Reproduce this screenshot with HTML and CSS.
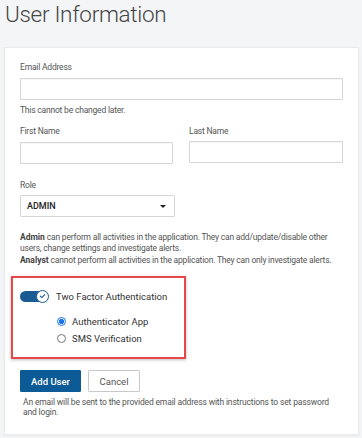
FILE: index.html
```html
<!DOCTYPE html>
<html lang="en">
<head>
<meta charset="utf-8">
<title>User Information</title>
<link rel="stylesheet" href="styles.css">
</head>
<body>
<h1 class="title">User Information</h1>
<div class="card">
  <div class="field">
    <label class="label" for="email">Email Address</label>
    <input class="input" id="email" type="text">
    <div class="hint">This cannot be changed later.</div>
  </div>
  <div class="row">
    <div class="field">
      <label class="label" for="first">First Name</label>
      <input class="input" id="first" type="text">
    </div>
    <div class="field">
      <label class="label" for="last">Last Name</label>
      <input class="input" id="last" type="text">
    </div>
  </div>
  <div class="field role">
    <label class="label">Role</label>
    <div class="select">
      <span class="select-value">ADMIN</span>
      <span class="caret"></span>
    </div>
  </div>
  <div class="desc">
    <p><b>Admin</b> can perform all activities in the application. They can add/update/disable other<br>users, change settings and investigate alerts.</p>
    <p><b>Analyst</b> cannot perform all activities in the application. They can only investigate alerts.</p>
  </div>
  <div class="tfa-box">
    <div class="toggle-row">
      <span class="toggle">
        <span class="knob">
          <svg viewBox="0 0 12 12" width="12" height="12"><path d="M3.6 6.2 L5.3 7.8 L8.4 4.4" fill="none" stroke="#1b5b94" stroke-width="1.2" stroke-linecap="round" stroke-linejoin="round"/></svg>
        </span>
      </span>
      <span class="toggle-label">Two Factor Authentication</span>
    </div>
    <div class="radios">
      <div class="radio-row"><span class="radio checked"></span><span class="radio-label">Authenticator App</span></div>
      <div class="radio-row"><span class="radio"></span><span class="radio-label">SMS Verification</span></div>
    </div>
  </div>
  <div class="actions">
    <button class="btn primary" type="button">Add User</button>
    <button class="btn secondary" type="button">Cancel</button>
  </div>
  <p class="note">An email will be sent to the provided email address with instructions to set password and login.</p>
</div>
</body>
</html>
```
FILE: styles.css
```css
html, body {
  margin: 0;
  padding: 0;
}
body {
  background: #f4f5f7;
  font-family: Roboto, "Liberation Sans", Arial, sans-serif;
  color: #333;
  width: 362px;
  height: 438px;
  overflow: hidden;
}
.title {
  margin: 0 0 19px 0;
  padding-left: 5px;
  font-size: 22.5px;
  letter-spacing: -0.3px;
  line-height: 28px;
  font-weight: 300;
  color: #454545;
}
.card {
  margin: 0 3px 0 4px;
  background: #fff;
  border: 1px solid #e9eaec;
  box-shadow: 0 1px 2px rgba(0,0,0,0.06);
  padding: 13px 15px 17px 15px;
  height: 388px;
  box-sizing: border-box;
}
.field {
  display: flex;
  flex-direction: column;
}
.label {
  font-size: 8.5px;
  letter-spacing: -0.2px;
  line-height: 12px;
  color: #555;
  margin-bottom: 4px;
}
.input {
  box-sizing: border-box;
  height: 22px;
  border: 1px solid #d6d6d6;
  border-radius: 1px;
  margin: 0;
  padding: 0 6px;
  background: #fff;
  box-shadow: inset 0 1px 1px rgba(0,0,0,0.04);
}
.field:first-child .label {
  margin-bottom: 5px;
}
.hint {
  font-size: 8.5px;
  letter-spacing: -0.2px;
  line-height: 12px;
  color: #555;
  margin-top: 4px;
}
.row {
  display: grid;
  grid-template-columns: 153px 154px;
  column-gap: 16px;
  margin-top: 9px;
}
.role {
  margin-top: 15px;
  width: 155px;
}
.select {
  box-sizing: border-box;
  height: 22px;
  border: 1px solid #d6d6d6;
  border-radius: 1px;
  display: flex;
  align-items: center;
  justify-content: space-between;
  padding: 0 8px 0 6px;
}
.select-value {
  font-size: 9px;
  font-weight: 500;
  color: #222;
}
.caret {
  width: 0;
  height: 0;
  border-left: 3px solid transparent;
  border-right: 3px solid transparent;
  border-top: 3px solid #222;
}
.desc {
  margin-top: 15px;
  font-size: 8.5px;
  letter-spacing: -0.2px;
  line-height: 10.5px;
  color: #555;
}
.desc p {
  margin: 0;
}
.desc p + p {
  margin-top: 2px;
}
.desc b {
  font-weight: 700;
  letter-spacing: 0;
  color: #444;
}
.tfa-box {
  margin-top: 10.5px;
  margin-left: -9px;
  width: 175px;
  box-sizing: border-box;
  border: 2px solid #e8474a;
  box-shadow: 0 1px 3px rgba(0,0,0,0.25);
  padding: 12px 0 10px 7px;
}
.toggle-row {
  display: flex;
  align-items: center;
  height: 12px;
}
.toggle {
  position: relative;
  width: 28px;
  height: 11px;
  border-radius: 6px;
  background: #1b5b94;
  flex: none;
}
.knob {
  position: absolute;
  right: -1px;
  top: -1px;
  width: 13px;
  height: 13px;
  border-radius: 50%;
  background: #fff;
  border: 1px solid #1b5b94;
  box-sizing: border-box;
  display: flex;
  align-items: center;
  justify-content: center;
}
.knob svg {
  display: block;
}
.toggle-label {
  margin-left: 8px;
  font-size: 9.5px;
  color: #333;
}
.radios {
  margin-top: 11px;
  margin-left: 37px;
}
.radio-row {
  display: flex;
  align-items: center;
  height: 17px;
}
.radio {
  width: 9px;
  height: 9px;
  box-sizing: border-box;
  border-radius: 50%;
  border: 1px solid #777;
  background: #fff;
  flex: none;
}
.radio.checked {
  border-color: #1a73e8;
  background: radial-gradient(circle, #1a73e8 0 2.4px, #fff 2.9px);
}
.radio-label {
  margin-left: 6px;
  font-size: 9.5px;
  color: #333;
}
.actions {
  display: flex;
  gap: 7px;
  margin-top: 11px;
}
.btn {
  height: 22px;
  box-sizing: border-box;
  font-family: Roboto, "Liberation Sans", Arial, sans-serif;
  font-size: 9.5px;
  border-radius: 1px;
  padding: 0;
  margin: 0;
}
.primary {
  width: 61px;
  background: #0d5b96;
  border: 1px solid #0d5b96;
  color: #fff;
  font-weight: 500;
}
.secondary {
  width: 52px;
  background: #fff;
  border: 1px solid #c9c9c9;
  color: #555;
}
.note {
  margin: 5px 0 0 3px;
  font-size: 8.5px;
  letter-spacing: -0.15px;
  line-height: 10px;
  color: #555;
}
```
